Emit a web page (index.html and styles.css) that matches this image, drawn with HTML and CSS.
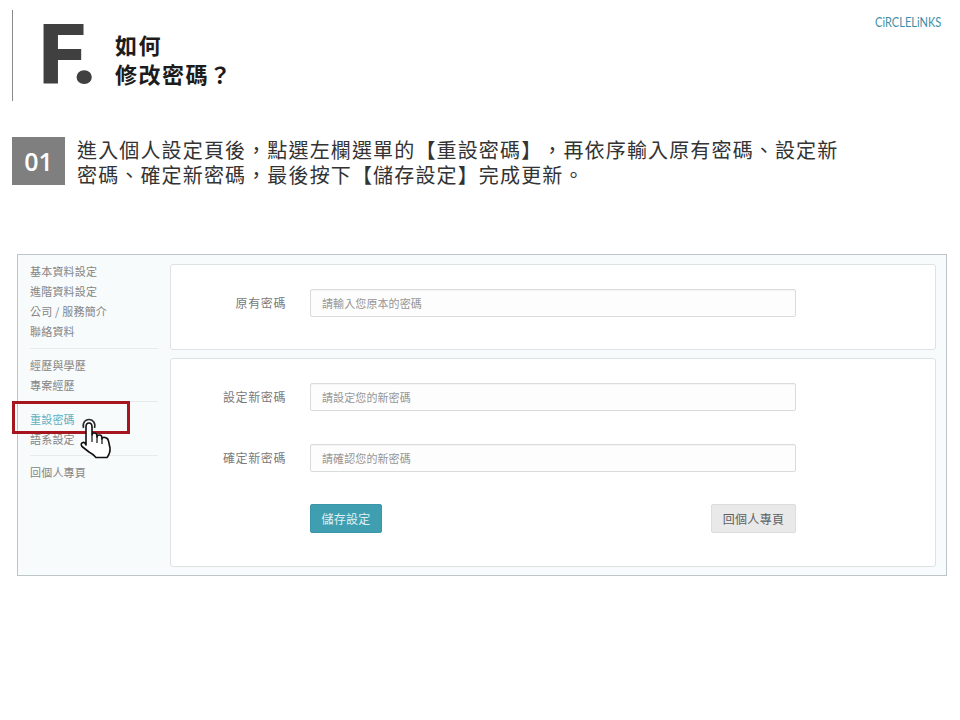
FILE: index.html
```html
<!DOCTYPE html>
<html lang="zh-Hant">
<head>
<meta charset="utf-8">
<title>如何修改密碼</title>
<link rel="stylesheet" href="styles.css">
</head>
<body>
<div class="page">
  <div class="logo">CiRCLELiNKS</div>
  <header class="head">
    <div class="letter">F.</div>
    <h1 class="title">如何<br>修改密碼？</h1>
  </header>
  <section class="step">
    <div class="badge">01</div>
    <p class="step-text">進入個人設定頁後，點選左欄選單的【重設密碼】，再依序輸入原有密碼、設定新<br>密碼、確定新密碼，最後按下【儲存設定】完成更新。</p>
  </section>
  <section class="shot">
    <nav class="side">
      <ul class="group g1">
        <li>基本資料設定</li>
        <li>進階資料設定</li>
        <li>公司 / 服務簡介</li>
        <li>聯絡資料</li>
      </ul>
      <ul class="group g2">
        <li>經歷與學歷</li>
        <li>專案經歷</li>
      </ul>
      <ul class="group g3">
        <li class="active">重設密碼</li>
        <li>語系設定</li>
      </ul>
      <ul class="group g4">
        <li>回個人專頁</li>
      </ul>
      <div class="highlight"></div>
      <svg class="hand" width="34" height="42" viewBox="0 0 34 42" aria-hidden="true">
        <path class="ripple" d="M3.500 10 C2 4 6 1.500 9 1.500 C12.500 1.500 16 4.500 14.500 10"/>
        <path class="palm" d="M6 27 L6 9 Q6 5 9 5 Q12 5 12 9 L12 17 Q12 15 14.500 15 Q17 15 17 18 L17 19 Q17 17 19.500 17 Q22 17 22 20 L22 21 Q22 19 25 19.500 Q28 20 28.500 23 L30 30 Q30.500 35 27 39.500 L16 39.500 Q13 36 9 34 L2 28.500 Q0 25.500 3 24.500 Q5 24 6 27 Z"/>
        <path class="crease" d="M12 17 L12 24 M17 18 L17 25 M22 20 L22 26"/>
      </svg>
    </nav>
    <div class="panels">
      <div class="panel first">
        <div class="row">
          <label class="label">原有密碼</label>
          <input class="field" type="text" placeholder="請輸入您原本的密碼">
        </div>
      </div>
      <div class="panel second">
        <div class="row">
          <label class="label">設定新密碼</label>
          <input class="field" type="text" placeholder="請設定您的新密碼">
        </div>
        <div class="row">
          <label class="label">確定新密碼</label>
          <input class="field" type="text" placeholder="請確認您的新密碼">
        </div>
        <div class="actions">
          <button class="btn primary" type="button">儲存設定</button>
          <button class="btn plain" type="button">回個人專頁</button>
        </div>
      </div>
    </div>
  </section>
</div>
</body>
</html>
```
FILE: styles.css
```css
* { box-sizing: border-box; }
html, body { margin: 0; padding: 0; background: #fff; }
body { font-family: "Noto Sans CJK TC", "Noto Sans", sans-serif; text-spacing-trim: space-all; }
.page { position: relative; width: 960px; height: 720px; overflow: hidden; padding-top: 10px; }

.logo {
  position: absolute; top: 14px; left: 875px;
  font-family: "Lato", sans-serif; font-size: 14px; line-height: 16px;
  color: #3d8fa6;
  transform: scaleX(.79); transform-origin: left center;
}

.head {
  display: flex; align-items: center;
  margin-left: 12px; height: 91px;
  border-left: 1px solid #8a8a8a;
  padding-left: 26px;
}
.letter {
  width: 76px;
  font-family: "Roboto", sans-serif; font-weight: 900; font-size: 84px; line-height: 91px;
  letter-spacing: -2px; color: #404040;
}
.title {
  margin: 6px 0 0;
  font-size: 22px; font-weight: 700; line-height: 29px; letter-spacing: 1.5px; color: #1c1c1c;
}

.step { display: flex; margin: 36px 0 0 12px; }
.badge {
  width: 53px; height: 48px;
  display: flex; align-items: center; justify-content: center;
  background: #7f7f7f; color: #fff;
  font-family: "Open Sans", sans-serif; font-size: 25px; font-weight: 600;
}
.step-text {
  margin: 0 0 0 12px;
  font-size: 20px; line-height: 25px; letter-spacing: 1.15px; color: #333;
  white-space: nowrap; font-weight: 400;
}

.shot {
  display: flex;
  margin: 67px 0 0 17px; width: 930px; height: 322px;
  border: 1px solid #bcc6c8;
  background: #f8fbfc;
}

.side { position: relative; width: 152px; flex: none; padding: 6px 0 0 12px; }
.group {
  list-style: none; margin: 0 12px 0 0; padding: 0;
  font-size: 11px; line-height: 20px; letter-spacing: 0.2px; color: #858585;
}
.g1 { padding-bottom: 7px; border-bottom: 1px solid #e6eaeb; margin-bottom: 6px; }
.g2 { padding-bottom: 6px; border-bottom: 1px solid #e6eaeb; margin-bottom: 7px; }
.g3 { padding-bottom: 6px; border-bottom: 1px solid #e6eaeb; margin-bottom: 6px; }
.active { color: #5fb0c0; }

.highlight {
  position: absolute; left: -6px; top: 146px;
  width: 118px; height: 33px;
  border: 3px solid #a6161f;
}
.hand { position: absolute; left: 62px; top: 163px; }
.ripple { fill: none; stroke: #2b2b2b; stroke-width: 1.6; }
.palm { fill: #fff; stroke: #111; stroke-width: 1.6; stroke-linejoin: round; }
.crease { fill: none; stroke: #111; stroke-width: 1.2; }

.panels { flex: 1; display: flex; flex-direction: column; gap: 8px; padding: 9px 10px 8px 0; }
.panel {
  background: #fff; border: 1px solid #dde2e3; border-radius: 3px;
  padding: 24px 0 0 0;
}
.first { height: 86px; }
.second { height: 209px; display: flex; flex-direction: column; gap: 33px; }
.row { display: flex; align-items: center; }
.label {
  width: 115px; text-align: right; flex: none;
  font-size: 12px; line-height: 18px; letter-spacing: 0.6px; color: #7a7a7a;
}
.field {
  margin-left: 24px; width: 486px; height: 28px;
  border: 1px solid #d8dcdc; border-radius: 2px; background: #fdfdfd;
  padding: 0 11px; font-family: inherit; font-size: 11px; letter-spacing: 0.1px; color: #555;
  box-shadow: inset 0 1px 1px rgba(0,0,0,.04);
}
.field::placeholder { color: #969696; opacity: 1; }
.actions {
  display: flex; justify-content: space-between;
  margin: -1px 0 0 139px; width: 486px;
}
.btn {
  height: 29px; padding: 0; border-radius: 2px;
  font-family: inherit; font-size: 12px; letter-spacing: 0.3px;
}
.primary { width: 72px; background: #3f9fb1; border: 1px solid #3a96a8; color: #dff1f4; }
.plain { width: 85px; background: #e9e9e9; border: 1px solid #dcdcdc; color: #5f5f5f; }
```
